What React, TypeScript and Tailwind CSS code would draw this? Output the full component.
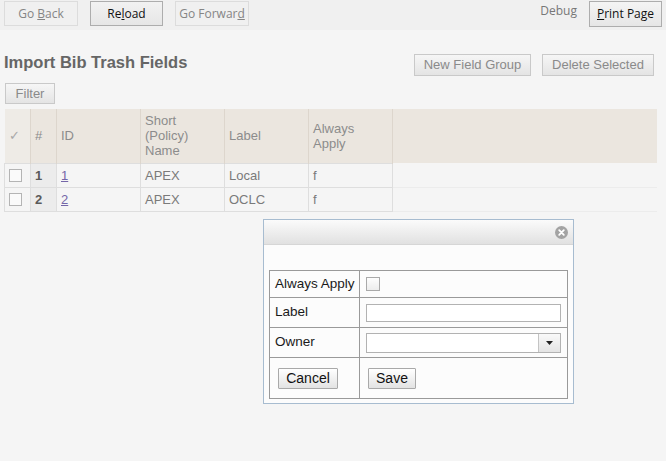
import React from "react";

const tbBtn = "h-[25px] border flex items-center justify-center text-[12px] font-['Open_Sans','Noto_Sans',sans-serif]";
const grayBtn = "border border-[#c9c9c9] bg-gradient-to-b from-[#f6f6f6] to-[#e4e4e4] text-[#8a8a8a] text-[13px] flex items-center justify-center";
const dlgBtn = "h-[21px] border border-[#a9a9a9] bg-gradient-to-b from-[#ffffff] to-[#e3e3e3] text-[14px] text-[#111] flex items-center justify-center rounded-[1px]";

type Row = { n: number; id: string; short: string; label: string; always: string };

const ROWS: Row[] = [
  { n: 1, id: "1", short: "APEX", label: "Local", always: "f" },
  { n: 2, id: "2", short: "APEX", label: "OCLC", always: "f" },
];

export default function App() {
  return (
    <div className="relative w-[666px] h-[461px] overflow-hidden bg-[#f5f5f5] font-['Liberation_Sans',Arial,sans-serif]">
      {/* toolbar */}
      <div className="h-[30px] bg-[#f0f0f0] flex items-start justify-between pl-[4px] pr-[4px] pt-[1px]">
        <div className="flex gap-[12px]">
          <div className={`${tbBtn} w-[74px] border-[#dcdcdc] bg-[#f0f0f0] text-[#858585]`}><span>Go <u>B</u>ack</span></div>
          <div className={`${tbBtn} w-[73px] border-[#adadad] bg-gradient-to-b from-[#f2f2f2] to-[#e6e6e6] text-[#111]`}><span>Re<u>l</u>oad</span></div>
          <div className={`${tbBtn} w-[74px] border-[#dcdcdc] bg-[#f0f0f0] text-[#858585]`}><span>Go Forwar<u>d</u></span></div>
        </div>
        <div className="flex items-start">
          <span className="text-[12px] text-[#777] font-['Open_Sans','Noto_Sans',sans-serif] mt-[1px] mr-[12px]">Debug</span>
          <div className={`${tbBtn} h-[26px] w-[73px] border-[#adadad] bg-gradient-to-b from-[#f4f4f4] to-[#e6e6e6] text-[#111]`}><span><u>P</u>rint Page</span></div>
        </div>
      </div>

      {/* title row */}
      <div className="mt-[22px] flex items-start justify-between pl-[4px] pr-[12px]">
        <h2 className="text-[16.5px] leading-[20px] font-bold text-[#666]">Import Bib Trash Fields</h2>
        <div className="flex gap-[11px] mt-[2px]">
          <div className={`${grayBtn} w-[117px] h-[22px]`}>New Field Group</div>
          <div className={`${grayBtn} w-[112px] h-[22px]`}>Delete Selected</div>
        </div>
      </div>

      <div className={`${grayBtn} ml-[5px] mt-[7px] w-[50px] h-[21px]`}>Filter</div>

      {/* grid */}
      <table className="ml-[4px] mt-[5px] table-fixed border-collapse w-[653px] text-[13px]">
        <colgroup>
          <col className="w-[26px]" />
          <col className="w-[26px]" />
          <col className="w-[84px]" />
          <col className="w-[84px]" />
          <col className="w-[84px]" />
          <col className="w-[84px]" />
          <col />
        </colgroup>
        <thead>
          <tr className="h-[54px] text-[#8c8c8c] font-normal text-left leading-[15px]">
            <th className="font-normal bg-[#eeebe6] border-r border-[#ddd6cd] pl-[4px] text-[#a8a8a8]">✓</th>
            <th className="font-normal bg-[#ebe6df] border-r border-[#ddd6cd] pl-[4px]">#</th>
            <th className="font-normal bg-[#ebe6df] border-r border-[#ddd6cd] pl-[4px]">ID</th>
            <th className="font-normal bg-[#ebe6df] border-r border-[#ddd6cd] pl-[4px] pr-[4px]">Short (Policy) Name</th>
            <th className="font-normal bg-[#ebe6df] border-r border-[#ddd6cd] pl-[4px]">Label</th>
            <th className="font-normal bg-[#ebe6df] border-r border-[#ddd6cd] pl-[4px] pr-[4px]">Always Apply</th>
            <th className="bg-[#ebe6df]" />
          </tr>
        </thead>
        <tbody>
          {ROWS.map((r) => (
            <tr key={r.n} className="h-[24px] text-[#7a7a7a]">
              <td className="border border-[#dedede] pl-[4px] pt-[1px]">
                <div className="w-[13px] h-[13px] border border-[#b4b4b4] bg-[#fafafa]" />
              </td>
              <td className="border border-[#dedede] bg-[#ececec] pl-[4px] pt-[2px] font-bold text-[#5a5a5a]">{r.n}</td>
              <td className="border border-[#dedede] pl-[4px] pt-[2px]"><span className="underline text-[#7466a8]">{r.id}</span></td>
              <td className="border border-[#dedede] pl-[4px] pt-[2px]">{r.short}</td>
              <td className="border border-[#dedede] pl-[4px] pt-[2px]">{r.label}</td>
              <td className="border border-[#dedede] pl-[4px] pt-[2px]">{r.always}</td>
              <td className="border-b border-[#ececec]" />
            </tr>
          ))}
        </tbody>
      </table>

      {/* dialog */}
      <div className="absolute left-[263px] top-[219px] w-[311px] h-[185px] border border-[#a7bcd0] bg-[#fcfcfc]">
        <div className="h-[25px] bg-gradient-to-b from-[#fbfbfb] to-[#e1e1e1] border-b border-[#d6d6d6] flex items-center justify-end pr-[5px]">
          <svg width="13" height="13" viewBox="0 0 13 13">
            <circle cx="6.5" cy="6.5" r="6.5" fill="#a3a3a3" />
            <path d="M4.2 4.2 L8.8 8.8 M8.8 4.2 L4.2 8.8" stroke="#fff" strokeWidth="1.8" strokeLinecap="round" />
          </svg>
        </div>
        <div className="pl-[5px] pt-[25px]">
          <table className="table-fixed border-collapse w-[299px] text-[13.5px] text-[#1a1a1a] border border-[#9a9a9a]">
            <colgroup>
              <col className="w-[90px]" />
              <col />
            </colgroup>
            <tbody>
              <tr className="h-[27px]">
                <td className="border border-[#9a9a9a] pl-[5px]">Always Apply</td>
                <td className="border border-[#9a9a9a] pl-[6px]">
                  <div className="w-[14px] h-[14px] border border-[#a9a9a9] bg-gradient-to-b from-[#fdfdfd] to-[#ececec]" />
                </td>
              </tr>
              <tr className="h-[30px]">
                <td className="border border-[#9a9a9a] pl-[5px]">Label</td>
                <td className="border border-[#9a9a9a] pl-[6px]">
                  <div className="w-[195px] h-[18px] border border-[#b2b2b2] bg-white" />
                </td>
              </tr>
              <tr className="h-[30px]">
                <td className="border border-[#9a9a9a] pl-[5px]">Owner</td>
                <td className="border border-[#9a9a9a] pl-[6px]">
                  <div className="w-[195px] h-[20px] border border-[#b2b2b2] bg-white flex justify-end">
                    <div className="w-[22px] h-full border-l border-[#c4c4c4] bg-gradient-to-b from-[#f9f9f9] to-[#e4e4e4] flex items-center justify-center">
                      <svg width="7" height="4" viewBox="0 0 7 4"><path d="M0 0 H7 L3.5 4 Z" fill="#222" /></svg>
                    </div>
                  </div>
                </td>
              </tr>
              <tr className="h-[41px]">
                <td className="border border-[#9a9a9a] pl-[8px]">
                  <div className={`${dlgBtn} w-[60px]`}>Cancel</div>
                </td>
                <td className="border border-[#9a9a9a] pl-[8px]">
                  <div className={`${dlgBtn} w-[48px]`}>Save</div>
                </td>
              </tr>
            </tbody>
          </table>
        </div>
      </div>
    </div>
  );
}
